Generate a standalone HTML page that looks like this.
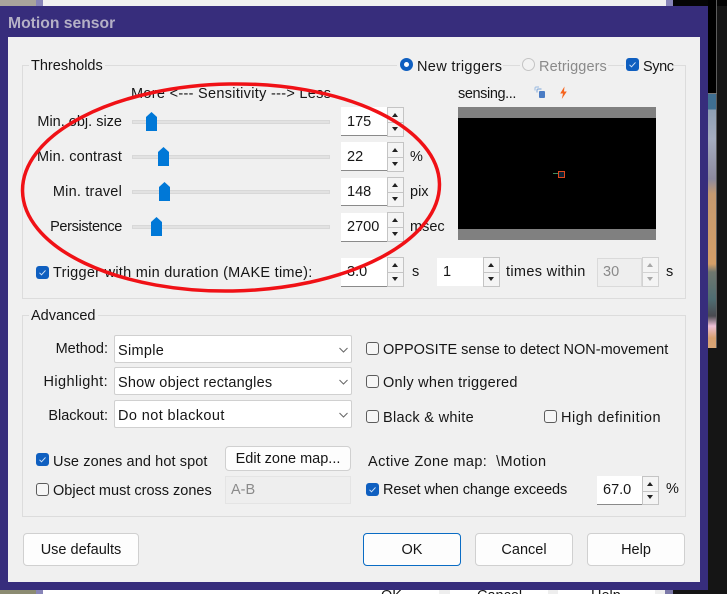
<!DOCTYPE html>
<html><head><meta charset="utf-8">
<style>
html,body{margin:0;padding:0;background:#151515;}
#r{position:relative;width:727px;height:594px;overflow:hidden;background:#151515;font:14.5px "Liberation Sans",sans-serif;color:#161616;}
#r div{position:absolute;box-sizing:border-box;}
.t{white-space:nowrap;line-height:18px;height:18px;}
.rt{text-align:right;}
.g{border:1px solid #dcdcdc;}
.e{background:#fff;border-bottom:1px solid #8a8a8a;}
.s{width:17px;border:1px solid #c4c4c4;background:#f4f4f4;}
.s i{position:absolute;left:4px;width:0;height:0;border-left:3.5px solid transparent;border-right:3.5px solid transparent;}
.s .u{top:5px;border-bottom:4px solid #222;}
.s .d{bottom:5px;border-top:4px solid #222;}
.s b{position:absolute;left:0;right:0;top:50%;height:1px;background:#c4c4c4;}
.tr{left:132px;width:198px;height:4px;background:#e2e2e2;border:1px solid #d8d8d8;}
.c{width:13px;height:13px;border-radius:3px;border:1px solid #5c5c5c;background:#f6f6f6;}
.k{width:13px;height:13px;border-radius:3px;background:#0f5fc0;}
.cb{left:114px;width:238px;background:#fff;border:1px solid #d0d0d0;border-radius:2px;}
.b{background:#fdfdfd;border:1px solid #d0d0d0;border-radius:4px;text-align:center;}
</style></head><body>
<div id="r">
<!-- background strips -->
<div style="left:0;top:0;width:36px;height:6px;background:#a9a49c"></div>
<div style="left:36px;top:0;width:7px;height:6px;background:#8885b8"></div>
<div style="left:43px;top:0;width:623px;height:6px;background:#f0f0f0"></div>
<div style="left:666px;top:0;width:7px;height:6px;background:#8885b8"></div>
<div style="left:673px;top:0;width:54px;height:6px;background:#050505"></div>
<div style="left:708px;top:0;width:8px;height:94px;background:#000"></div>
<div style="left:716px;top:0;width:1px;height:348px;background:#5c5c5c"></div>
<div style="left:708px;top:93px;width:9px;height:1px;background:#777"></div>
<div style="left:708px;top:94px;width:8px;height:254px;background:linear-gradient(#3f6f92 0,#3f6f92 15px,#8fa0b4 16px,#a5adc0 45px,#8d8a9f 85px,#c59a70 100px,#d59f68 170px,#70786f 178px,#4f6d72 205px,#4a4a50 222px,#eec0d6 232px,#d7a070 244px,#d9a676 254px)"></div>
<div style="left:0;top:590px;width:36px;height:4px;background:#8c8c72"></div>
<div style="left:36px;top:590px;width:7px;height:4px;background:#8885b8"></div>
<div style="left:43px;top:590px;width:396px;height:4px;background:#fff"></div>
<div style="left:439px;top:590px;width:11px;height:4px;background:#eee"></div>
<div style="left:450px;top:590px;width:98px;height:4px;background:#fff"></div>
<div style="left:548px;top:590px;width:10px;height:4px;background:#eee"></div>
<div style="left:558px;top:590px;width:97px;height:4px;background:#fff"></div>
<div style="left:655px;top:590px;width:10px;height:4px;background:#eee"></div>
<div style="left:665px;top:590px;width:8px;height:4px;background:#7b78a8"></div>
<!-- clipped button text below the dialog -->
<div class="t" style="left:381px;top:587px;">OK</div>
<div class="t" style="left:477px;top:587px;">Cancel</div>
<div class="t" style="left:591px;top:587px;">Help</div>
<!-- frame -->
<div style="left:0;top:6px;width:708px;height:584px;background:#372d7c"></div>
<div style="left:8px;top:37px;width:692px;height:545px;background:#f0f0f0"></div>
<div class="t" style="left:8px;top:15px;font-weight:bold;font-size:15.7px;color:#b5b1c6;">Motion sensor</div>

<!-- Thresholds -->
<div class="g" style="left:22px;top:65px;width:664px;height:234px"></div>
<div class="t" style="left:29px;top:57px;background:#f0f0f0;padding:0 2px;">Thresholds</div>
<div style="left:397px;top:56px;width:106px;height:20px;background:#f0f0f0"></div>
<div style="left:520px;top:56px;width:88px;height:20px;background:#f0f0f0"></div>
<div style="left:624px;top:56px;width:50px;height:20px;background:#f0f0f0"></div>
<div style="left:400px;top:58px;width:13px;height:13px;border-radius:50%;border:4px solid #0f5fc0;background:#fff"></div>
<div class="t" style="left:417px;top:58px;letter-spacing:.33px;">New triggers</div>
<div style="left:522px;top:58px;width:13px;height:13px;border-radius:50%;border:1px solid #c4c4c4;background:#f2f2f2"></div>
<div class="t" style="left:539px;top:58px;color:#8a8a8a;letter-spacing:.1px;">Retriggers</div>
<div class="k" style="left:626px;top:58px"><svg width="13" height="13" style="display:block"><path d="M3.5 6.8l2 2 4-4.4" fill="none" stroke="#cfe2f8" stroke-width="1"/></svg></div>
<div class="t" style="left:643px;top:58px;letter-spacing:-.4px;">Sync</div>

<div class="t" style="left:131px;top:85px;letter-spacing:.3px;">More &lt;--- Sensitivity ---&gt; Less</div>
<div class="t" style="left:458px;top:85px;letter-spacing:-.4px;">sensing...</div>
<svg style="position:absolute;left:534px;top:86px" width="12" height="13"><path d="M1 4.5V2.5Q1 1 2.5 1H5" fill="none" stroke="#a9c4e4" stroke-width="1.2"/><path d="M3 6.5V4.5Q3 3 4.5 3H7.5" fill="none" stroke="#8fb2de" stroke-width="1.2"/><rect x="5" y="5" width="6" height="7" rx="1" fill="#4a7cc4"/></svg>
<svg style="position:absolute;left:559px;top:86px" width="9" height="14"><path d="M5.5 0.5L1.2 7.5H4L2.8 13L7.8 5.5H5Z" fill="#f5641e"/></svg>

<div class="t rt" style="left:20px;width:102px;top:113px;">Min. obj. size</div>
<div class="t rt" style="left:20px;width:102px;top:148px;letter-spacing:.15px;">Min. contrast</div>
<div class="t rt" style="left:20px;width:102px;top:183px;letter-spacing:.2px;">Min. travel</div>
<div class="t rt" style="left:20px;width:102px;top:218px;letter-spacing:-.35px;">Persistence</div>

<div class="tr" style="top:120px"></div>
<div class="tr" style="top:155px"></div>
<div class="tr" style="top:190px"></div>
<div class="tr" style="top:225px"></div>
<svg style="position:absolute;left:146px;top:112px" width="11" height="19"><path d="M0 5L5.5 0L11 5V19H0Z" fill="#0078d7"/></svg>
<svg style="position:absolute;left:158px;top:147px" width="11" height="19"><path d="M0 5L5.5 0L11 5V19H0Z" fill="#0078d7"/></svg>
<svg style="position:absolute;left:159px;top:182px" width="11" height="19"><path d="M0 5L5.5 0L11 5V19H0Z" fill="#0078d7"/></svg>
<svg style="position:absolute;left:151px;top:217px" width="11" height="19"><path d="M0 5L5.5 0L11 5V19H0Z" fill="#0078d7"/></svg>

<div class="e" style="left:341px;top:107px;width:46px;height:29px"></div>
<div class="s" style="left:387px;top:107px;height:30px"><b></b><i class="u"></i><i class="d"></i></div>
<div class="t" style="left:347px;top:113px;">175</div>
<div class="e" style="left:341px;top:142px;width:46px;height:29px"></div>
<div class="s" style="left:387px;top:142px;height:30px"><b></b><i class="u"></i><i class="d"></i></div>
<div class="t" style="left:347px;top:148px;">22</div>
<div class="t" style="left:410px;top:148px;">%</div>
<div class="e" style="left:341px;top:178px;width:46px;height:28px"></div>
<div class="s" style="left:387px;top:177px;height:30px"><b></b><i class="u"></i><i class="d"></i></div>
<div class="t" style="left:347px;top:183px;">148</div>
<div class="t" style="left:410px;top:183px;">pix</div>
<div class="e" style="left:341px;top:213px;width:46px;height:29px"></div>
<div class="s" style="left:387px;top:212px;height:30px"><b></b><i class="u"></i><i class="d"></i></div>
<div class="t" style="left:347px;top:218px;">2700</div>
<div class="t" style="left:410px;top:218px;">msec</div>

<!-- preview -->
<div style="left:458px;top:107px;width:198px;height:133px;background:#808080"></div>
<div style="left:458px;top:118px;width:198px;height:111px;background:#000"></div>
<div style="left:553px;top:173px;width:5px;height:1px;background:#3c8a5c"></div>
<div style="left:558px;top:171px;width:7px;height:7px;border:1.5px solid #e0481e;background:#123"></div>

<!-- trigger row -->
<div class="k" style="left:36px;top:266px"><svg width="13" height="13" style="display:block"><path d="M3.5 6.8l2 2 4-4.4" fill="none" stroke="#cfe2f8" stroke-width="1"/></svg></div>
<div class="t" style="left:53px;top:264px;letter-spacing:.27px;">Trigger with min duration (MAKE time):</div>
<div class="e" style="left:341px;top:258px;width:46px;height:29px"></div>
<div class="s" style="left:387px;top:257px;height:30px"><b></b><i class="u"></i><i class="d"></i></div>
<div class="t" style="left:347px;top:263px;">3.0</div>
<div class="t" style="left:412px;top:263px;">s</div>
<div class="e" style="left:437px;top:258px;width:46px;height:28px;border-bottom:0"></div>
<div class="s" style="left:483px;top:257px;height:30px"><b></b><i class="u"></i><i class="d"></i></div>
<div class="t" style="left:443px;top:263px;">1</div>
<div class="t" style="left:506px;top:263px;letter-spacing:.33px;">times within</div>
<div style="left:597px;top:258px;width:45px;height:29px;background:#eee;border:1px solid #dadada"></div>
<div class="s" style="left:642px;top:257px;height:30px;border-color:#d2d2d2"><b style="background:#d2d2d2"></b><i class="u" style="border-bottom-color:#a8a8a8"></i><i class="d" style="border-top-color:#a8a8a8"></i></div>
<div class="t" style="left:603px;top:263px;color:#8a8a8a;">30</div>
<div class="t" style="left:666px;top:263px;">s</div>

<!-- Advanced -->
<div class="g" style="left:22px;top:315px;width:664px;height:202px"></div>
<div class="t" style="left:29px;top:307px;background:#f0f0f0;padding:0 2px;">Advanced</div>

<div class="t rt" style="left:20px;width:88px;top:340px;">Method:</div>
<div class="t rt" style="left:20px;width:88px;top:373px;letter-spacing:.4px;">Highlight:</div>
<div class="t rt" style="left:20px;width:88px;top:407px;">Blackout:</div>

<div class="cb" style="top:335px;height:28px"></div>
<div class="t" style="left:118px;top:342px;letter-spacing:.3px;">Simple</div>
<div class="cb" style="top:367px;height:28px"></div>
<div class="t" style="left:118px;top:374px;letter-spacing:.2px;">Show object rectangles</div>
<div class="cb" style="top:400px;height:28px"></div>
<div class="t" style="left:118px;top:407px;letter-spacing:.4px;">Do not blackout</div>
<svg style="position:absolute;left:339px;top:347px" width="9" height="6"><path d="M0.5 1L4.5 5L8.5 1" fill="none" stroke="#666"/></svg>
<svg style="position:absolute;left:339px;top:379px" width="9" height="6"><path d="M0.5 1L4.5 5L8.5 1" fill="none" stroke="#666"/></svg>
<svg style="position:absolute;left:339px;top:412px" width="9" height="6"><path d="M0.5 1L4.5 5L8.5 1" fill="none" stroke="#666"/></svg>

<div class="c" style="left:366px;top:342px"></div>
<div class="t" style="left:383px;top:341px;">OPPOSITE sense to detect NON-movement</div>
<div class="c" style="left:366px;top:375px"></div>
<div class="t" style="left:383px;top:374px;letter-spacing:.26px;">Only when triggered</div>
<div class="c" style="left:366px;top:410px"></div>
<div class="t" style="left:383px;top:409px;letter-spacing:.3px;">Black &amp; white</div>
<div class="c" style="left:544px;top:410px"></div>
<div class="t" style="left:561px;top:409px;letter-spacing:.55px;">High definition</div>

<div class="k" style="left:36px;top:453px"><svg width="13" height="13" style="display:block"><path d="M3.5 6.8l2 2 4-4.4" fill="none" stroke="#cfe2f8" stroke-width="1"/></svg></div>
<div class="t" style="left:53px;top:453px;letter-spacing:.1px;">Use zones and hot spot</div>
<div class="b t" style="left:225px;top:446px;width:126px;height:25px;line-height:25px;">Edit zone map...</div>
<div class="t" style="left:368px;top:453px;letter-spacing:.4px;">Active Zone map:&nbsp; \Motion</div>

<div class="c" style="left:36px;top:483px"></div>
<div class="t" style="left:53px;top:482px;">Object must cross zones</div>
<div style="left:225px;top:476px;width:126px;height:28px;background:#eee;border:1px solid #e4e4e4"></div>
<div class="t" style="left:231px;top:481px;color:#8a8a8a;">A-B</div>
<div class="k" style="left:366px;top:483px"><svg width="13" height="13" style="display:block"><path d="M3.5 6.8l2 2 4-4.4" fill="none" stroke="#cfe2f8" stroke-width="1"/></svg></div>
<div class="t" style="left:383px;top:481px;letter-spacing:-.08px;">Reset when change exceeds</div>
<div class="e" style="left:597px;top:476px;width:45px;height:29px"></div>
<div class="s" style="left:642px;top:476px;height:29px"><b></b><i class="u"></i><i class="d"></i></div>
<div class="t" style="left:603px;top:481px;">67.0</div>
<div class="t" style="left:666px;top:480px;">%</div>

<!-- buttons -->
<div class="b t" style="left:23px;top:533px;width:116px;height:33px;line-height:33px;">Use defaults</div>
<div class="b t" style="left:363px;top:533px;width:98px;height:33px;line-height:33px;border-color:#0a6cc4;">OK</div>
<div class="b t" style="left:475px;top:533px;width:98px;height:33px;line-height:33px;">Cancel</div>
<div class="b t" style="left:587px;top:533px;width:98px;height:33px;line-height:33px;">Help</div>

<!-- red ellipse -->
<svg style="position:absolute;left:0;top:0" width="727" height="594"><ellipse cx="231" cy="187.5" rx="208.5" ry="103.5" transform="rotate(-1 231 187.5)" fill="none" stroke="#f01116" stroke-width="3.5"/></svg>
</div>
</body></html>
